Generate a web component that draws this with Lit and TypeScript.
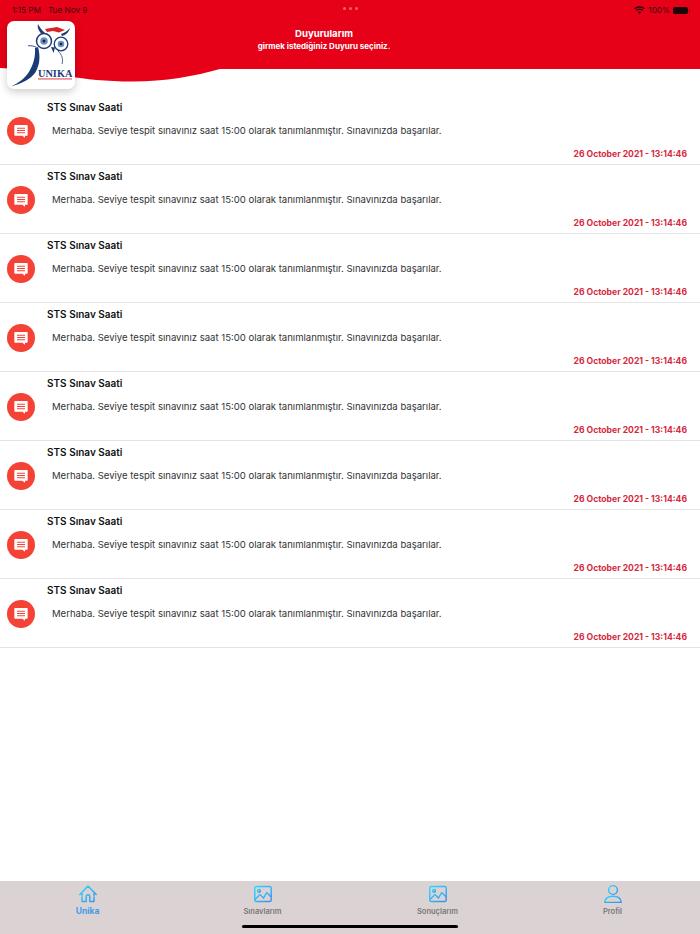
import { LitElement, html, css, svg } from 'lit';
import { customElement } from 'lit/decorators.js';

const tabs = [
  { label: 'Unika', icon: 'home', active: true },
  { label: 'Sınavlarım', icon: 'image', active: false },
  { label: 'Sonuçlarım', icon: 'image', active: false },
  { label: 'Profil', icon: 'user', active: false },
];

const icons: Record<string, unknown> = {
  home: svg`<path d="M1.8 10.5 10 2l8.200 8.500M4 8.500v3M16 8.500v3M4 13v4.500h4.200v-5a1.800 1.800 0 0 1 3.600 0v5H16V13" />`,
  image: svg`<rect x="1.800" y="2.500" width="16.400" height="15" rx="1.600" /><circle cx="6" cy="6.800" r="1.400" /><path d="M2.500 15 7 10.500l3.500 3.500 3.200-5.500 4 4" />`,
  user: svg`<circle cx="10" cy="6" r="4.400" /><path d="M1.800 18.400c0-3.800 3-6.200 8.200-6.200s8.200 2.400 8.200 6.200z" />`,
};

@customElement('app-root')
export class AppRoot extends LitElement {
  static styles = css`
    :host {
      display: flex;
      flex-direction: column;
      height: 934px;
      background: #fff;
      font-family: Inter, 'Liberation Sans', sans-serif;
      color: #111;
      overflow: hidden;
    }

    .header {
      position: relative;
      height: 96px;
      flex: none;
    }

    .wave {
      position: absolute;
      inset: 0;
      width: 700px;
      height: 96px;
    }

    .status {
      position: relative;
      height: 17px;
      padding: 3px 12px 0 12px;
      box-sizing: border-box;
      display: flex;
      align-items: center;
      justify-content: space-between;
      font-size: 8.2px;
      line-height: 11px;
      color: #3a0a10;
    }

    .status-left {
      display: flex;
      gap: 7px;
    }

    .status-right {
      display: flex;
      align-items: center;
      gap: 3px;
    }

    .dots {
      position: absolute;
      left: 343px;
      top: 7px;
      display: flex;
      gap: 3px;
    }

    .dots i {
      width: 3px;
      height: 3px;
      border-radius: 50%;
      background: #f0606e;
    }

    .battery {
      position: relative;
      width: 15px;
      height: 7px;
      background: #1a0508;
      border-radius: 2px;
    }

    .battery::after {
      content: '';
      position: absolute;
      right: -2px;
      top: 2px;
      width: 1px;
      height: 3px;
      background: #8a0a18;
    }

    .heading {
      position: relative;
      padding: 10px 52px 0 0;
      text-align: center;
      color: #fff;
      font-weight: 700;
    }

    .heading div:first-child {
      font-size: 9.6px;
      line-height: 13px;
    }

    .heading div:last-child {
      font-size: 8px;
      line-height: 13px;
    }

    .logo {
      position: absolute;
      left: 7px;
      top: 21px;
      width: 68px;
      height: 68px;
      background: #fff;
      border-radius: 7px;
      box-shadow: 0 3px 8px rgba(0, 0, 0, 0.2);
      overflow: hidden;
    }

    .logo svg {
      width: 68px;
      height: 68px;
      display: block;
    }

    .logo text {
      font-family: 'Liberation Serif', serif;
      font-weight: 700;
      font-size: 10.3px;
      fill: #1d3a78;
    }

    .list {
      flex: 1;
    }

    .row {
      height: 69px;
      box-sizing: border-box;
      border-bottom: 1px solid #e4e4e4;
      display: grid;
      grid-template-columns: 47px 1fr;
      grid-template-rows: 22px 1fr 22px;
    }

    .badge {
      grid-row: 1 / 4;
      align-self: center;
      margin-left: 7px;
      width: 28px;
      height: 28px;
      border-radius: 50%;
      background: #f44336;
      display: flex;
      align-items: center;
      justify-content: center;
    }

    .badge svg {
      width: 16px;
      height: 16px;
    }

    .title {
      font-size: 10px;
      font-weight: 600;
      line-height: 22px;
    }

    .msg {
      padding: 1px 0 0 5px;
      font-size: 9.55px;
      line-height: 24px;
      color: #333;
      white-space: nowrap;
    }

    .date {
      padding-right: 13px;
      text-align: right;
      font-size: 8.6px;
      font-weight: 700;
      line-height: 22px;
      color: #d6283c;
    }

    .tabbar {
      position: relative;
      flex: none;
      height: 53px;
      background: #dbd3d3;
      display: grid;
      grid-template-columns: repeat(4, 1fr);
    }

    .tab {
      display: flex;
      flex-direction: column;
      align-items: center;
      padding-top: 3px;
      font-size: 7.5px;
      font-weight: 600;
      color: #777;
    }

    .tab svg {
      width: 20px;
      height: 20px;
      fill: none;
      stroke: url(#tabGrad);
      stroke-width: 1.4;
      stroke-linejoin: round;
      stroke-linecap: round;
    }

    .tab span {
      margin-top: 2px;
      line-height: 12px;
    }

    .tab.active {
      color: #3d9be9;
      font-size: 8.5px;
      font-weight: 700;
    }

    .tab.active span {
      margin-top: 1px;
    }

    .home-bar {
      position: absolute;
      left: 242px;
      bottom: 6px;
      width: 216px;
      height: 3px;
      border-radius: 2px;
      background: #000;
    }

    .defs {
      position: absolute;
      width: 0;
      height: 0;
    }
  `;

  private renderRow() {
    return html`
      <div class="row">
        <div class="badge">
          <svg viewBox="0 0 24 24" fill="#fff">
            <path d="M3 3h18a1 1 0 0 1 1 1v14a1 1 0 0 1-1 1h-3v3l-4-3H3a1 1 0 0 1-1-1V4a1 1 0 0 1 1-1zm3 4v1.600h12V7H6zm0 3.400V12h12v-1.600H6zm0 3.400v1.600h12v-1.600H6z" fill-rule="evenodd" />
          </svg>
        </div>
        <div class="title">STS Sınav Saati</div>
        <div class="msg">Merhaba. Seviye tespit sınavınız saat 15:00 olarak tanımlanmıştır. Sınavınızda başarılar.</div>
        <div class="date">26 October 2021 - 13:14:46</div>
      </div>
    `;
  }

  render() {
    return html`
      <div class="header">
        <svg class="wave" viewBox="0 0 700 96">
          <path fill="#e60018" d="M0 0H700V69H220C195 76 165 81.500 133 81.500C105 81.500 85 79 70 76.500C45 72 25 69 0 68Z" />
        </svg>
        <div class="status">
          <div class="status-left"><span>1:15 PM</span><span>Tue Nov 9</span></div>
          <div class="status-right">
            <svg width="11" height="8" viewBox="0 0 11 8" fill="none" stroke="#1a0508" stroke-width="1.300">
              <path d="M.6 2.800c2.800-2.500 7-2.500 9.800 0M2.300 4.600c1.800-1.600 4.600-1.600 6.400 0" />
              <path d="M5.500 7.800 3.900 6.200c1-.8 2.200-.8 3.200 0z" fill="#1a0508" stroke="none" />
            </svg>
            <span>100%</span>
            <div class="battery"></div>
          </div>
        </div>
        <div class="dots"><i></i><i></i><i></i></div>
        <div class="heading">
          <div>Duyurularım</div>
          <div>girmek istediğiniz Duyuru seçiniz.</div>
        </div>
        <div class="logo">
          <svg viewBox="0 0 68 68">
            <path fill="#d8232a" d="M38 8 50 6l8 3-6 2.500-6-1.500-6 1z" />
            <path fill="#1d3a78" d="M31 3c1.500 3 3.500 6 7 9l-3 1c-3-2.500-5-6-4-10zM63 7c-1 4-4 7-8 8l-1-2c3.500-1 6.500-3 9-6z" />
            <circle cx="37" cy="20" r="7.500" fill="#fff" stroke="#1d3a78" stroke-width="1.500" />
            <circle cx="54" cy="23" r="6.800" fill="#fff" stroke="#1d3a78" stroke-width="1.300" />
            <circle cx="37" cy="20" r="3.800" fill="#6f90c0" />
            <circle cx="54" cy="23" r="3.300" fill="#6f90c0" />
            <circle cx="37" cy="20" r="1.500" fill="#12224a" />
            <circle cx="54" cy="23" r="1.300" fill="#12224a" />
            <path fill="none" stroke="#1d3a78" stroke-width=".9" d="M21 24.800c3-.3 6 .2 8.500 1.500" />
            <path fill="#1d3a78" d="M31 26c2.500 9 2 18-3 26-5 6.500-13 10.500-24 13.500 8-4 14.500-8.500 18.500-15.500 4-7 6-14 5.500-23z" />
            <path fill="none" stroke="#1d3a78" stroke-width=".8" d="M51 30c4 4 5.500 8 4 13" />
            <path fill="#1d3a78" d="m44 26 2.500 6 1.500-5.500z" />
            <text x="31" y="56">UNIKA</text>
            <rect x="31" y="57.500" width="34" height=".9" fill="#d8232a" />
          </svg>
        </div>
      </div>
      <div class="list">
        ${Array.from({ length: 8 }, () => this.renderRow())}
      </div>
      <div class="tabbar">
        <svg class="defs">
          <defs>
            <linearGradient id="tabGrad" x1="0" y1="0" x2="1" y2="1">
              <stop offset="0" stop-color="#25dcff" />
              <stop offset="1" stop-color="#3a8df0" />
            </linearGradient>
          </defs>
        </svg>
        ${tabs.map(
          (t) => html`
            <div class="tab ${t.active ? 'active' : ''}">
              <svg viewBox="0 0 20 20">${icons[t.icon]}</svg>
              <span>${t.label}</span>
            </div>
          `
        )}
        <div class="home-bar"></div>
      </div>
    `;
  }
}
